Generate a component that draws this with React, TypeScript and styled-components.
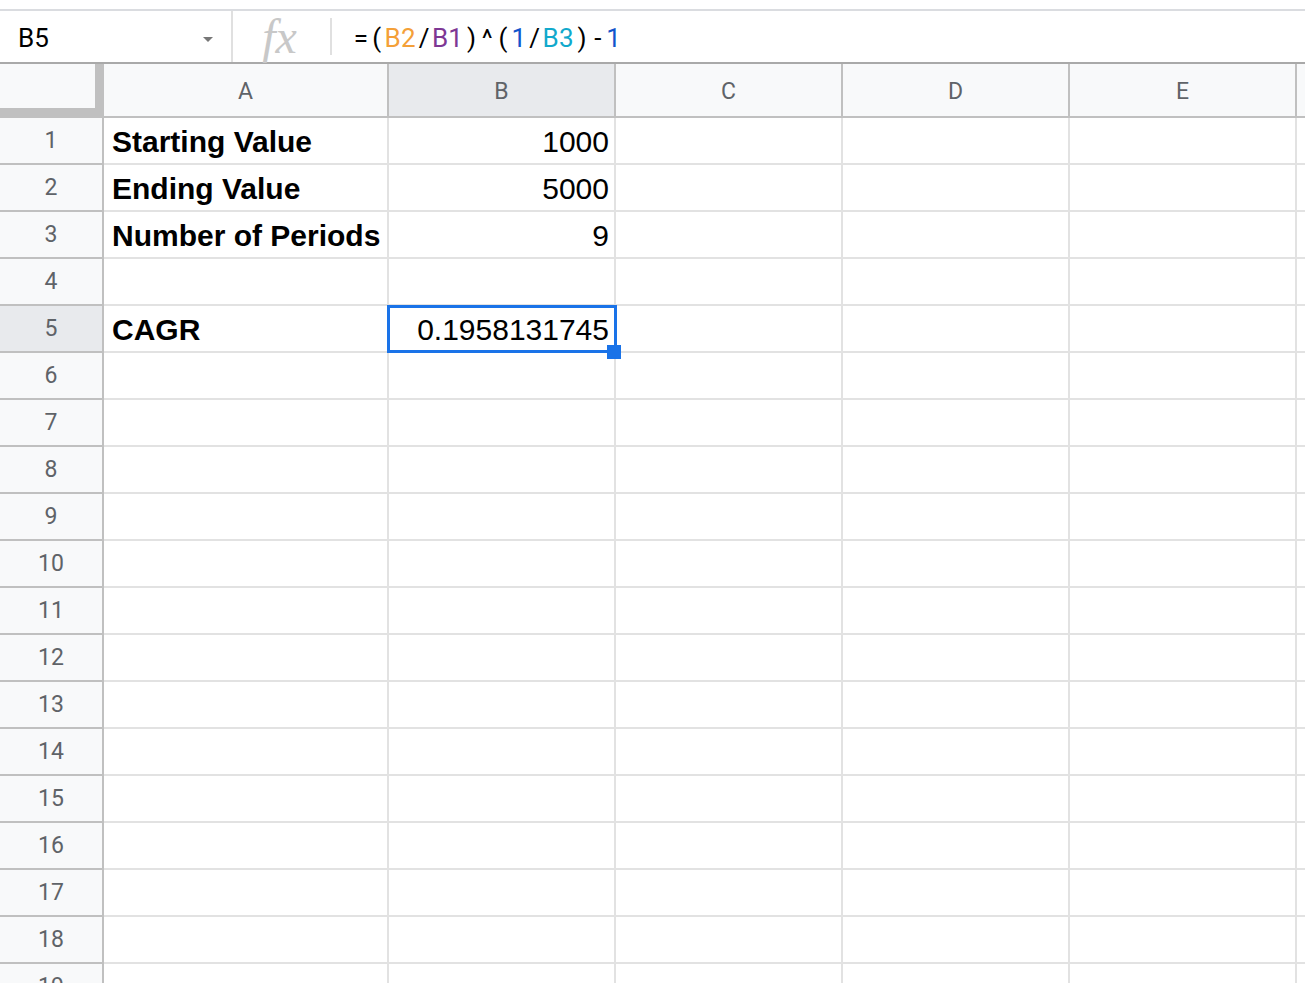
import React from 'react';
import styled, { createGlobalStyle } from 'styled-components';

const GlobalStyle = createGlobalStyle`
    html, body {
        margin: 0;
        padding: 0;
        background: #ffffff;
        overflow: hidden;
    }
    body {
        font-family: Roboto, "Liberation Sans", Arial, sans-serif;
    }
`

const StyledPage = styled.div`
    width: 1305px;
    height: 983px;
    overflow: hidden;
    background: #ffffff;
    padding-top: 9px;
    box-sizing: border-box;
`

const StyledFormulaBar = styled.div`
    display: flex;
    align-items: center;
    height: 51px;
    border-top: 2px solid #dadce0;
    border-bottom: 2px solid #a9a9a9;
`

const StyledNameBox = styled.div`
    width: 231px;
    height: 100%;
    display: flex;
    align-items: center;
    justify-content: space-between;
    padding: 2px 18px 0 18px;
    box-sizing: border-box;
    font-family: Roboto, "Liberation Sans", sans-serif;
    font-size: 26px;
    color: #000000;
`

const StyledArrow = styled.span`
    width: 0;
    height: 0;
    margin-top: 3px;
    border-left: 5px solid transparent;
    border-right: 5px solid transparent;
    border-top: 5px solid #777777;
`

const StyledDivider = styled.div<{ $height: number }>`
    width: 2px;
    height: ${p => p.$height}px;
    background: #e0e0e0;
    flex-shrink: 0;
`

const StyledFx = styled.div`
    width: 97px;
    padding-right: 4px;
    box-sizing: border-box;
    text-align: center;
    font-family: "Liberation Serif", "Times New Roman", serif;
    font-style: italic;
    font-size: 48px;
    line-height: 51px;
    color: #c8c8c8;
`

const StyledFormula = styled.div`
    display: flex;
    padding: 3px 0 0 21px;
    font-family: Roboto, "Liberation Sans", sans-serif;
    font-size: 26px;
    line-height: 48px;
`

const StyledChar = styled.span<{ $color: string }>`
    display: inline-block;
    width: 15.8px;
    text-align: center;
    color: ${p => p.$color};
`

const StyledGrid = styled.div`
    display: grid;
    grid-template-columns: 104px 285px repeat(5, 227px);
    grid-template-rows: 54px;
    grid-auto-rows: 47px;
`

const StyledCorner = styled.div`
    background: #f8f9fa;
    border-right: 9px solid #c0c0c0;
    border-bottom: 10px solid #c0c0c0;
    box-sizing: border-box;
`

const StyledColHeader = styled.div<{ $active: boolean }>`
    background: ${p => p.$active ? '#e8eaed' : '#f8f9fa'};
    border-right: 2px solid #c0c0c0;
    border-bottom: 2px solid #c0c0c0;
    box-sizing: border-box;
    padding-top: 3px;
    text-align: center;
    font-size: 23px;
    line-height: 49px;
    color: #5f6368;
`

const StyledRowHeader = styled.div<{ $active: boolean }>`
    background: ${p => p.$active ? '#e8eaed' : '#f8f9fa'};
    border-right: 2px solid #c0c0c0;
    border-bottom: 2px solid #c0c0c0;
    box-sizing: border-box;
    text-align: center;
    font-size: 23px;
    line-height: 45px;
    color: #5f6368;
`

const StyledCell = styled.div<{ $bold: boolean; $align: 'left' | 'right'; $selected: boolean }>`
    position: relative;
    z-index: ${p => p.$selected ? 2 : 0};
    border-right: 2px solid #e2e2e2;
    border-bottom: 2px solid #e2e2e2;
    box-sizing: border-box;
    padding: 2px 5px 0 8px;
    text-align: ${p => p.$align};
    white-space: nowrap;
    font-family: "Liberation Sans", Arial, sans-serif;
    font-size: 30px;
    font-weight: ${p => p.$bold ? 700 : 400};
    line-height: 44px;
    color: #000000;
`

const StyledSelection = styled.div`
    position: absolute;
    top: -1px;
    left: -2px;
    right: -3px;
    bottom: -2px;
    border: 3px solid #1a73e8;
    pointer-events: none;
`

const StyledHandle = styled.div`
    position: absolute;
    right: -7px;
    bottom: -8px;
    width: 14px;
    height: 14px;
    background: #1a73e8;
`

type CellData = {
    value: string;
    bold?: boolean;
    align?: 'left' | 'right';
}

const columns = ['A', 'B', 'C', 'D', 'E', 'F']
const rowCount = 20
const selectedCol = 'B'
const selectedRow = 5

const cellData: Record<string, CellData> = {
    A1: { value: 'Starting Value', bold: true },
    A2: { value: 'Ending Value', bold: true },
    A3: { value: 'Number of Periods', bold: true },
    A5: { value: 'CAGR', bold: true },
    B1: { value: '1000', align: 'right' },
    B2: { value: '5000', align: 'right' },
    B3: { value: '9', align: 'right' },
    B5: { value: '0.1958131745', align: 'right' },
}

// formula tokens with the reference colours sheets gives them
const formulaParts: [string, string][] = [
    ['=(', '#000000'],
    ['B2', '#f4a038'],
    ['/', '#000000'],
    ['B1', '#7e3794'],
    [')^(', '#000000'],
    ['1', '#1155cc'],
    ['/', '#000000'],
    ['B3', '#11a9cc'],
    [')-', '#000000'],
    ['1', '#1155cc'],
]

const FormulaBar = () => {
    const chars = formulaParts.flatMap(([text, color]) => text.split('').map(ch => ({ ch, color })))
    return (
        <StyledFormulaBar>
            <StyledNameBox>
                <span>{selectedCol}{selectedRow}</span>
                <StyledArrow />
            </StyledNameBox>
            <StyledDivider $height={51} />
            <StyledFx>fx</StyledFx>
            <StyledDivider $height={37} />
            <StyledFormula>
                {chars.map((c, i) => <StyledChar key={i} $color={c.color}>{c.ch}</StyledChar>)}
            </StyledFormula>
        </StyledFormulaBar>
    )
}

const App = () => {
    const rows = Array.from({ length: rowCount }, (_, i) => i + 1)

    return (
        <StyledPage>
            <GlobalStyle />
            <FormulaBar />
            <StyledGrid>
                <StyledCorner />
                {columns.map(col => (
                    // column F is only partly on screen, its letter falls outside the window
                    <StyledColHeader key={col} $active={col === selectedCol}>{col === 'F' ? '' : col}</StyledColHeader>
                ))}
                {rows.map(row => (
                    <React.Fragment key={row}>
                        <StyledRowHeader $active={row === selectedRow}>{row}</StyledRowHeader>
                        {columns.map(col => {
                            const data = cellData[`${col}${row}`]
                            const isSelected = col === selectedCol && row === selectedRow
                            return (
                                <StyledCell
                                    key={col}
                                    $bold={!!data?.bold}
                                    $align={data?.align ?? 'left'}
                                    $selected={isSelected}
                                >
                                    {data?.value}
                                    {isSelected && <StyledSelection />}
                                    {isSelected && <StyledHandle />}
                                </StyledCell>
                            )
                        })}
                    </React.Fragment>
                ))}
            </StyledGrid>
        </StyledPage>
    );
};

export default App;
